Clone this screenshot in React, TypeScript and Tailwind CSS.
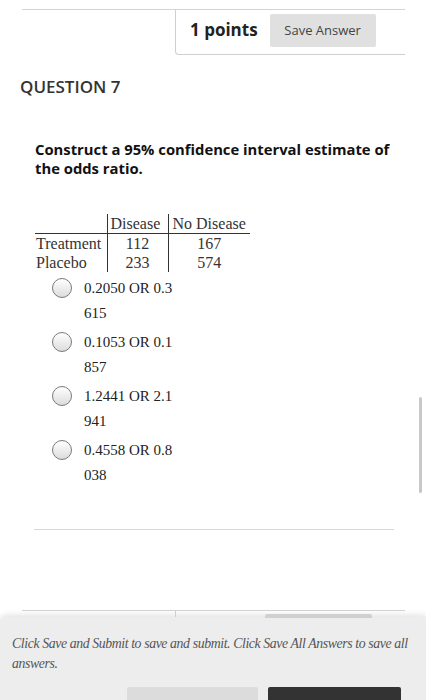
const options = [
  ['0.2050 OR 0.3', '615'],
  ['0.1053 OR 0.1', '857'],
  ['1.2441 OR 2.1', '941'],
  ['0.4558 OR 0.8', '038'],
]

function Radio() {
  return (
    <span className="block h-[20px] w-[20px] shrink-0 rounded-full border border-[#7a7a7a] bg-gradient-to-b from-white to-[#dcdcdc]" />
  )
}

export default function App() {
  return (
    <div className="relative h-[700px] w-[426px] overflow-hidden bg-white font-['Open_Sans',sans-serif] text-[#333]">
      {/* header box */}
      <div className="pl-[22px] pr-[21px] pt-[9px]">
        <div className="flex border-t border-[#d4d4d4]">
          <div className="w-[153px]" />
          <div className="flex h-[45px] flex-1 items-start rounded-bl-[4px] border-b border-l border-[#cfcfcf] pl-[14px] pt-[4px]">
            <span className="text-[17px] font-bold leading-[31px] text-[#222]">1 points</span>
            <span className="ml-[12px] flex h-[33px] w-[106px] items-center justify-center rounded-[2px] bg-[#e0e0e0] text-[13px] text-[#444]">
              Save Answer
            </span>
          </div>
        </div>
      </div>

      <div className="pl-[20px] pt-[20px] text-[17px] font-semibold leading-[24px] text-[#333]">QUESTION 7</div>

      <div className="pl-[35px] pr-[30px] pt-[41px] text-[14.8px] font-bold leading-[19px] text-[#111]">
        Construct a 95% confidence interval estimate of the odds ratio.
      </div>

      {/* table */}
      <div className="pl-[35px] pt-[36px] font-['Liberation_Serif',serif] text-[16px] leading-[19px] text-[#333]">
        <table className="border-collapse">
          <tbody>
            <tr>
              <td className="w-[72px] p-0" />
              <td className="w-[61px] border-l border-[#333] p-0 pl-[3px] text-left">Disease</td>
              <td className="w-[82px] border-l border-[#333] p-0 pl-[4px] text-left">No Disease</td>
            </tr>
            <tr className="border-t border-[#333]">
              <td className="p-0 pl-[1px]">Treatment</td>
              <td className="border-l border-[#333] p-0 text-center">112</td>
              <td className="border-l border-[#333] p-0 text-center">167</td>
            </tr>
            <tr>
              <td className="p-0 pl-[1px]">Placebo</td>
              <td className="border-l border-[#333] p-0 text-center">233</td>
              <td className="border-l border-[#333] p-0 text-center">574</td>
            </tr>
          </tbody>
        </table>
      </div>

      {/* options */}
      <div className="flex flex-col gap-[6px] pl-[52px] pt-[6px] font-['Liberation_Serif',serif] text-[15px] text-[#222]">
        {options.map(([a, b]) => (
          <div key={a} className="flex gap-[12px]">
            <Radio />
            <div className="leading-[25px]">
              <div className="-mt-[2px]">{a}</div>
              <div>{b}</div>
            </div>
          </div>
        ))}
      </div>

      <div className="mx-[34px] mt-[41px] w-[360px] border-t border-[#d8d8d8]" />

      {/* next header, under the footer */}
      <div className="pl-[22px] pr-[21px] pt-[80px]">
        <div className="flex h-[7px] border-t border-[#d4d4d4]">
          <div className="w-[153px]" />
          <div className="flex flex-1 border-l border-[#cfcfcf] pl-[89px] pt-[3px]">
            <span className="h-[4px] w-[107px] rounded-t-[2px] bg-[#d0d0d0]" />
          </div>
        </div>
      </div>

      {/* footer */}
      <div className="h-[200px] rounded-tl-[6px] bg-[#ededed] pl-[12px] pr-[4px] pt-[17px] shadow-[0_-2px_6px_rgba(0,0,0,0.12)]">
        <p className="font-['Liberation_Serif',serif] text-[13.8px] italic leading-[20px] tracking-[-0.4px] text-[#555]">
          Click Save and Submit to save and submit. Click Save All Answers to save all answers.
        </p>
        <div className="mt-[13px] flex justify-end gap-[10px] pr-[21px]">
          <span className="flex h-[36px] w-[131px] items-start justify-center rounded-[2px] bg-[#dcdcdc] pt-[10px] text-[14px] text-[#333]">
            Save All Answers
          </span>
          <span className="flex h-[36px] w-[133px] items-start justify-center rounded-[2px] bg-[#333] pt-[10px] text-[14px] text-white">
            Save and Submit
          </span>
        </div>
      </div>

      {/* scrollbar */}
      <div className="absolute left-[419px] top-[397px] h-[96px] w-[3px] rounded-full bg-[#c8c8c8]" />
    </div>
  )
}
